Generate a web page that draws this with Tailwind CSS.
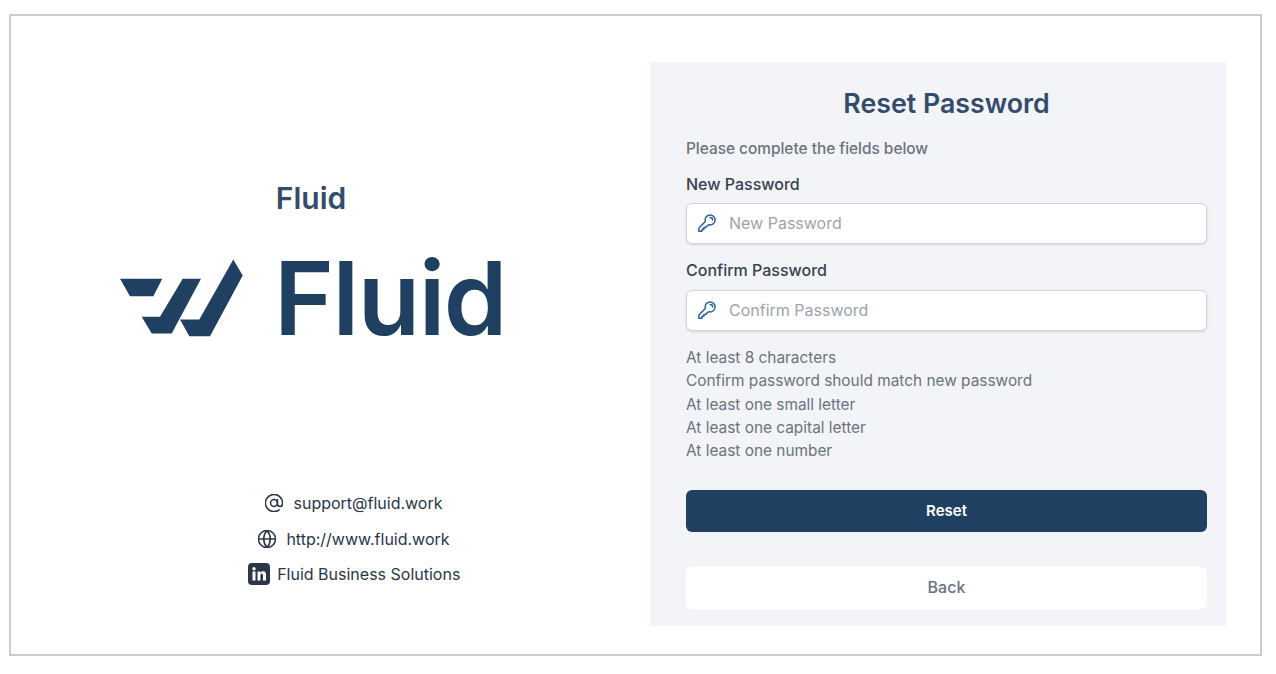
<!DOCTYPE html>
<html lang="en">
<head>
    <meta charset="UTF-8">
    <title>Reset Password</title>
    <script src="https://cdn.jsdelivr.net/npm/@tailwindcss/browser@4"></script>
</head>
<body class="bg-white font-['Inter',sans-serif]">
    <div class="w-[1276px] h-[674px] pt-[14px] pl-[9px]">
        <div class="w-[1253px] h-[642px] border-2 border-[#cccccc] flex">
            <!-- left side -->
            <div class="w-[600px] flex flex-col items-center">
                <h2 class="mt-[164px] text-[30px] leading-[36px] font-semibold text-[#344b6c]">Fluid</h2>
                <div class="mt-[43px] ml-[3.5px] flex items-center gap-[31.5px]">
                    <svg class="w-[123px] h-[78px]" viewBox="120 259.5 123 78">
                        <polygon fill="#1f4060" points="120,279.3 162.3,279.3 153.3,296.7 130,296.7"/>
                        <polygon fill="#1f4060" points="182.7,279.3 201,279.3 171.7,334 151.7,334 141.7,317.3 160,317.3"/>
                        <polygon fill="#1f4060" points="233.3,260 242.7,276 210,336.7 189.3,336.7 180,320 199.3,320"/>
                    </svg>
                    <span class="text-[102px] leading-[78px] font-semibold tracking-[-1.5px] text-[#1f4060]">Fluid</span>
                </div>
                <div class="mt-[155px] ml-[86px] flex flex-col items-center gap-[13.5px] text-[16px] leading-[22px] text-[#2b3648]">
                    <div class="flex items-center gap-[10px]">
                        <svg class="w-[18px] h-[18px]" viewBox="1.5 1.5 21 21" fill="none" stroke="currentColor" stroke-width="1.8" stroke-linecap="round" stroke-linejoin="round"><circle cx="12" cy="12" r="4"/><path d="M16 8v5a3 3 0 0 0 6 0v-1a10 10 0 1 0-4 8"/></svg>
                        <span>support@fluid.work</span>
                    </div>
                    <div class="flex items-center gap-[10px]">
                        <svg class="w-[18px] h-[18px]" viewBox="1.5 1.5 21 21" fill="none" stroke="currentColor" stroke-width="1.8" stroke-linecap="round" stroke-linejoin="round"><circle cx="12" cy="12" r="10"/><path d="M2 12h20"/><path d="M12 2a15 15 0 0 1 0 20a15 15 0 0 1 0-20"/></svg>
                        <span>http://www.fluid.work</span>
                    </div>
                    <div class="flex items-center gap-[7.5px]">
                        <div class="w-[22px] h-[22px] rounded-[4px] bg-[#2b3648] flex items-center justify-center">
                            <svg class="w-[14px] h-[14px]" viewBox="0 0 14 14" fill="white"><rect x="0.5" y="4.5" width="3" height="9"/><circle cx="2" cy="1.8" r="1.7"/><path d="M5.5 4.5h2.8v1.3c.5-.9 1.5-1.5 2.7-1.5 2.3 0 3 1.5 3 3.6v5.6h-3V8.4c0-1-.3-1.7-1.2-1.7-1 0-1.4.7-1.4 1.7v5.1h-2.9z"/></svg>
                        </div>
                        <span>Fluid Business Solutions</span>
                    </div>
                </div>
            </div>
            <!-- form panel -->
            <div class="ml-[39px] mt-[46px] w-[576px] h-[564px] bg-[#f3f4f7] pl-[36px] pr-[19px] flex flex-col">
                <h1 class="mt-[25px] text-center text-[26.75px] leading-[32px] font-semibold text-[#344b6c]">Reset Password</h1>
                <p class="mt-[19px] text-[15.4px] leading-[22px] font-medium text-[#6b7280]">Please complete the fields below</p>
                <label class="mt-[13px] text-[16px] leading-[22px] font-medium text-[#374151]">New Password</label>
                <div class="mt-[8px] h-[41px] pb-[2px] bg-white border border-[#d1d5db] rounded-[6px] shadow-sm flex items-center pl-[10px] gap-[12px]">
                    <svg class="w-[20px] h-[20px] text-[#2a6099]" viewBox="0 0 24 24" fill="none" stroke="currentColor" stroke-width="1.8" stroke-linecap="round" stroke-linejoin="round"><path d="M15.75 5.25a3 3 0 0 1 3 3m3 0a6 6 0 0 1-7.029 5.912c-.563-.097-1.159.026-1.563.43L10.5 17.25H8.25v2.25H6v2.25H2.25v-2.818c0-.597.237-1.17.659-1.591l6.499-6.499c.404-.404.527-1 .43-1.563A6 6 0 1 1 21.75 8.25Z"/></svg>
                    <span class="text-[16px] text-[#9ca3af]">New Password</span>
                </div>
                <label class="mt-[15px] text-[16px] leading-[22px] font-medium text-[#374151]">Confirm Password</label>
                <div class="mt-[9px] h-[41px] pb-[2px] bg-white border border-[#d1d5db] rounded-[6px] shadow-sm flex items-center pl-[10px] gap-[12px]">
                    <svg class="w-[20px] h-[20px] text-[#2a6099]" viewBox="0 0 24 24" fill="none" stroke="currentColor" stroke-width="1.8" stroke-linecap="round" stroke-linejoin="round"><path d="M15.75 5.25a3 3 0 0 1 3 3m3 0a6 6 0 0 1-7.029 5.912c-.563-.097-1.159.026-1.563.43L10.5 17.25H8.25v2.25H6v2.25H2.25v-2.818c0-.597.237-1.17.659-1.591l6.499-6.499c.404-.404.527-1 .43-1.563A6 6 0 1 1 21.75 8.25Z"/></svg>
                    <span class="text-[16px] text-[#9ca3af]">Confirm Password</span>
                </div>
                <ul class="mt-[15px] text-[15.4px] leading-[23.3px] text-[#6b7280]">
                    <li>At least 8 characters</li>
                    <li>Confirm password should match new password</li>
                    <li>At least one small letter</li>
                    <li>At least one capital letter</li>
                    <li>At least one number</li>
                </ul>
                <button class="mt-[28px] h-[42px] rounded-[6px] bg-[#1f4060] text-white text-[15px] font-semibold">Reset</button>
                <button class="mt-[35px] h-[42px] pb-[2px] rounded-[6px] bg-white text-[#6b7280] text-[16px] font-medium">Back</button>
            </div>
        </div>
    </div>
</body>
</html>
